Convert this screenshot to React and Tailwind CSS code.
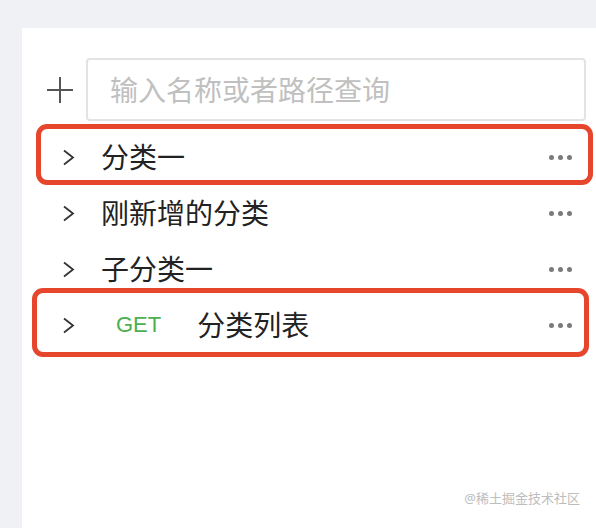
import React from "react";

const rows = [
  { name: "分类一", mark: "top-[-5px] bottom-0 left-[14px] right-[3px]" },
  { name: "刚新增的分类" },
  { name: "子分类一" },
  { name: "分类列表", method: "GET", mark: "top-[-9px] bottom-[-4px] left-[10px] right-[7px]" },
];

function Chevron() {
  return (
    <svg width="13" height="17" viewBox="0 0 13 17" className="shrink-0">
      <polyline points="2,1.5 11,8.5 2,15.5" fill="none" stroke="#333" strokeWidth="1.8" />
    </svg>
  );
}

function MoreDots() {
  return (
    <div className="flex items-center gap-[4px]">
      <span className="w-[5px] h-[5px] rounded-full bg-[#7a7a7a]" />
      <span className="w-[5px] h-[5px] rounded-full bg-[#7a7a7a]" />
      <span className="w-[5px] h-[5px] rounded-full bg-[#7a7a7a]" />
    </div>
  );
}

export default function App() {
  return (
    <div
      className="w-[596px] h-[528px] bg-[#f0f1f5] pt-[28px] pl-[22px] overflow-hidden"
      style={{ fontFamily: '"Noto Sans", "Noto Sans CJK SC", sans-serif' }}
    >
      <div className="relative h-full bg-white pt-[30px]">
        {/* search row */}
        <div className="flex items-center pl-[25px] pr-[10px]">
          <svg width="26" height="26" viewBox="0 0 26 26" className="shrink-0">
            <line x1="13" y1="0" x2="13" y2="26" stroke="#555" strokeWidth="2" />
            <line x1="0" y1="13" x2="26" y2="13" stroke="#555" strokeWidth="2" />
          </svg>
          <div className="ml-[13px] flex-1 h-[63px] border-2 border-[#e3e3e3] rounded-[4px] flex items-center pl-[22px]">
            <span className="text-[28px] text-[#c0c0c0] leading-none">输入名称或者路径查询</span>
          </div>
        </div>

        {/* category list */}
        <div className="mt-[8px]">
          {rows.map((row, i) => (
            <div key={i} className="relative h-[56px] flex items-center pl-[40px] pr-[24px]">
              <Chevron />
              {row.method ? (
                <>
                  <span className="ml-[41px] text-[22px] text-[#4caf50] leading-none" style={{ fontFamily: '"Liberation Sans", sans-serif' }}>
                    {row.method}
                  </span>
                  <span className="ml-[36px] text-[28px] text-[#222] leading-none">{row.name}</span>
                </>
              ) : (
                <span className="ml-[26px] text-[28px] text-[#222] leading-none">{row.name}</span>
              )}
              <div className="ml-auto">
                <MoreDots />
              </div>
              {row.mark && (
                <div className={`absolute ${row.mark} border-[5px] border-[#e5462c] rounded-[11px] pointer-events-none`} />
              )}
            </div>
          ))}
        </div>

        <div className="absolute right-[16px] bottom-[20px] text-[13px] text-[#bdbdbd]">@稀土掘金技术社区</div>
      </div>
    </div>
  );
}
